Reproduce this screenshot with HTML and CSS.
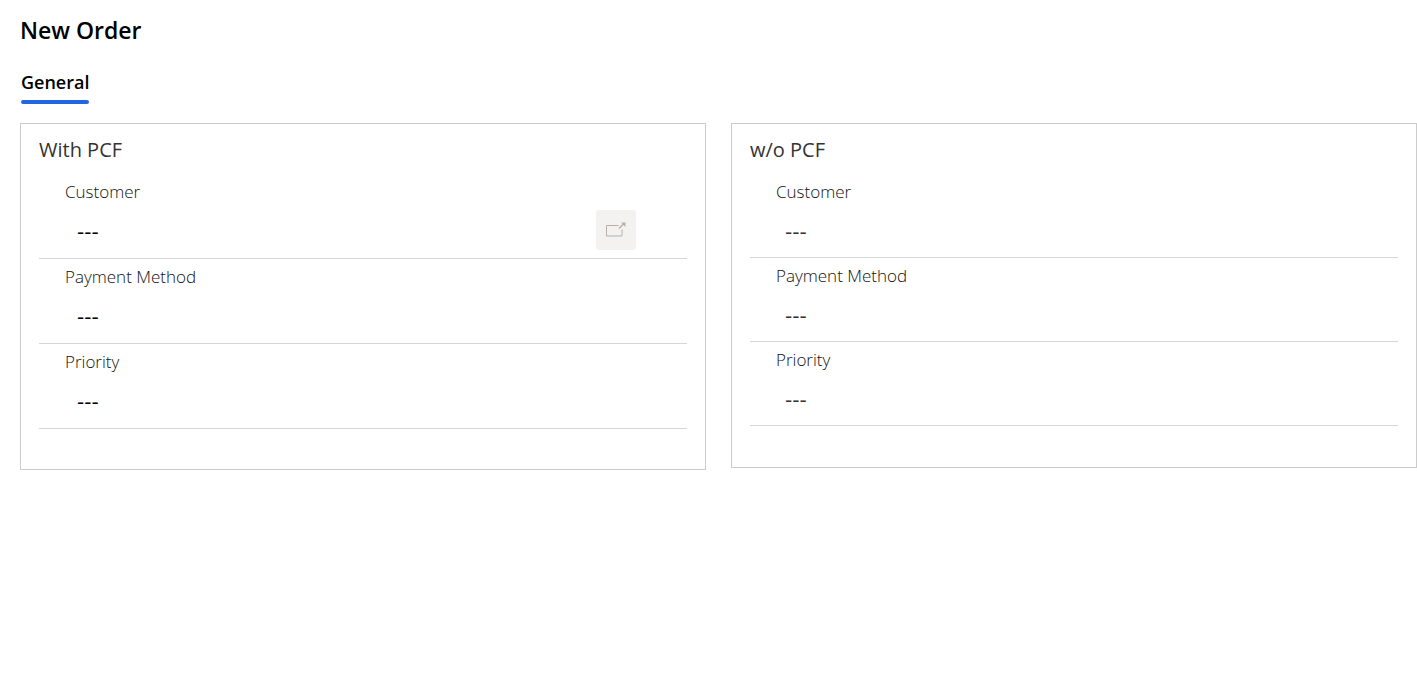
FILE: index.html
```html
<!DOCTYPE html>
<html lang="en">
<head>
<meta charset="utf-8">
<meta name="viewport" content="width=device-width, initial-scale=1">
<title>New Order</title>
<link rel="stylesheet" href="styles.css">
</head>
<body>
<main class="page">
  <h1 class="title">New Order</h1>
  <nav class="tabs" role="tablist">
    <button class="tab" type="button" role="tab" aria-selected="true">General</button>
  </nav>
  <form class="sections">
    <section class="card custom">
      <h2 class="heading">With PCF</h2>
      <div class="field">
        <label class="label" for="a-customer">Customer</label>
        <div class="control">
          <input class="value" id="a-customer" type="text" value="---">
          <button class="open" type="button" aria-label="Open customer">
            <svg class="icon" viewBox="0 0 20 16" aria-hidden="true">
              <path d="M12.500 3.500H.5v10.500h15.500V7.500" fill="none" stroke="currentColor"/>
              <path d="M13 6.500l4.500-4.500" fill="none" stroke="currentColor" stroke-width="1.500"/>
              <path d="M15 .5h4.500V5z" fill="currentColor"/>
            </svg>
          </button>
        </div>
      </div>
      <div class="field">
        <label class="label" for="a-payment">Payment Method</label>
        <div class="control"><input class="value" id="a-payment" type="text" value="---"></div>
      </div>
      <div class="field">
        <label class="label" for="a-priority">Priority</label>
        <div class="control"><input class="value" id="a-priority" type="text" value="---"></div>
      </div>
    </section>
    <section class="card standard">
      <h2 class="heading">w/o PCF</h2>
      <div class="field">
        <label class="label" for="b-customer">Customer</label>
        <div class="control"><input class="value" id="b-customer" type="text" value="---"></div>
      </div>
      <div class="field">
        <label class="label" for="b-payment">Payment Method</label>
        <div class="control"><input class="value" id="b-payment" type="text" value="---"></div>
      </div>
      <div class="field">
        <label class="label" for="b-priority">Priority</label>
        <div class="control"><input class="value" id="b-priority" type="text" value="---"></div>
      </div>
    </section>
  </form>
</main>
</body>
</html>
```
FILE: styles.css
```css
* { box-sizing: border-box; }
body {
  margin: 0;
  background: #fff;
  color: #000;
  font-family: "Segoe UI", "Open Sans", "Noto Sans", sans-serif;
}
.page { padding: 14px 0 20px 20px; }
.title {
  margin: 0;
  font-size: 23px;
  line-height: 32px;
  font-weight: 600;
}
.tabs { display: flex; margin: 22px 0 19px 1px; }
.tab {
  position: relative;
  height: 36px;
  padding: 0 0 8px;
  border: 0;
  background: none;
  color: #000;
  font: 600 18px/28px "Segoe UI", "Open Sans", "Noto Sans", sans-serif;
}
.tab::after {
  content: "";
  position: absolute;
  inset: auto 0 0;
  height: 4px;
  border-radius: 2px;
  background: #2266e3;
}
.sections {
  display: grid;
  grid-template-columns: repeat(2, minmax(0, 1fr));
  align-items: start;
  gap: 25px;
}
.card { padding: 12px 18px 40px; border: 1px solid #ccc; }
.card.standard { padding-bottom: 41px; }
.heading {
  margin: 0 0 10px;
  color: #333;
  font-size: 20px;
  line-height: 28px;
  font-weight: 400;
}
.field { padding-top: 6px; border-bottom: 1px solid #d6d6d6; }
.label {
  display: block;
  width: fit-content;
  margin-left: 26px;
  color: #111;
  font-size: 17px;
  line-height: 24px;
  font-weight: 300;
}
.control {
  display: flex;
  align-items: center;
  height: 54px;
  padding: 0 51px 2px 38px;
}
.standard .control { height: 53px; padding: 0 51px 0 35px; }
.value {
  flex: 1;
  min-width: 0;
  height: 40px;
  padding: 3px 0 0;
  border: 0;
  outline: 0;
  background: none;
  color: #000;
  font: 400 20px/24px "DejaVu Sans", sans-serif;
}
.standard .value { color: #333; }
.open {
  display: grid;
  place-items: center;
  width: 40px;
  height: 40px;
  padding: 0;
  border: 0;
  border-radius: 3px;
  background: #f3f2f1;
  color: #b5b1ab;
}
.icon { display: block; width: 20px; height: 16px; }
```
